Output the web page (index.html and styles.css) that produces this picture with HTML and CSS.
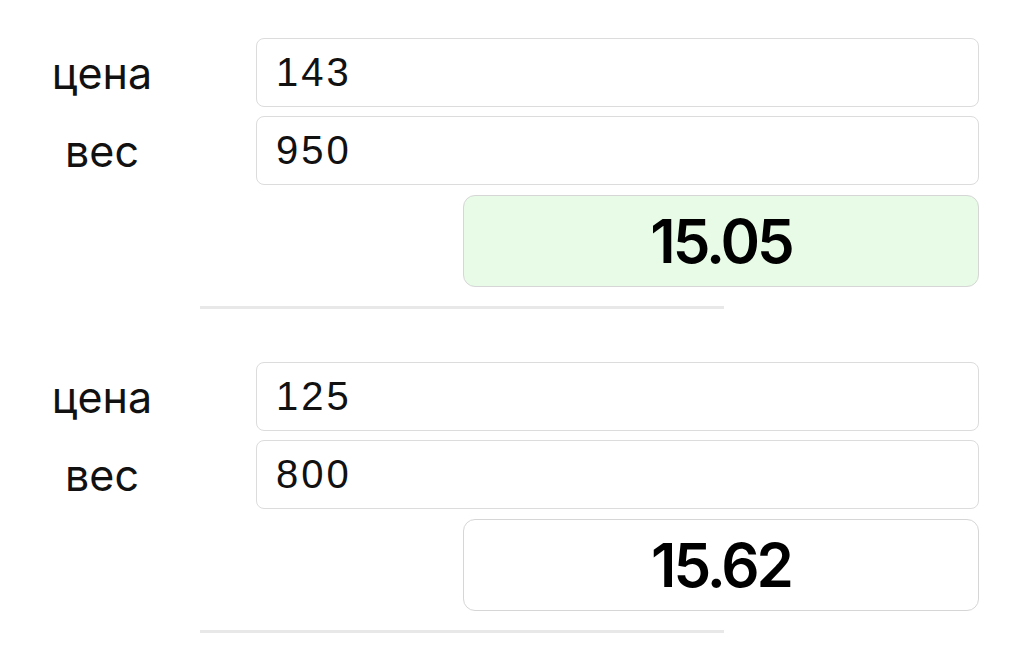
FILE: index.html
```html
<!DOCTYPE html>
<html lang="ru">
<head>
<meta charset="utf-8">
<title>Цена за вес</title>
<link rel="stylesheet" href="styles.css">
</head>
<body>
<main class="page">
  <section class="group">
    <label class="label">цена</label>
    <div class="field">143</div>
    <label class="label">вес</label>
    <div class="field">950</div>
    <div class="result result-best">15.05</div>
    <div class="divider"></div>
  </section>
  <section class="group">
    <label class="label">цена</label>
    <div class="field">125</div>
    <label class="label">вес</label>
    <div class="field">800</div>
    <div class="result">15.62</div>
    <div class="divider"></div>
  </section>
</main>
</body>
</html>
```
FILE: styles.css
```css
html, body {
  margin: 0;
  padding: 0;
  background: #ffffff;
}

.page {
  padding-top: 38px;
  display: flex;
  flex-direction: column;
  gap: 53px;
}

.group {
  display: grid;
  grid-template-columns: 204px 723px;
  column-gap: 52px;
  row-gap: 9px;
  align-items: center;
}

.label {
  text-align: center;
  font-family: "Inter", "Noto Sans", sans-serif;
  font-size: 43px;
  font-weight: 400;
  color: #111;
}

.field {
  grid-column: 2;
  box-sizing: border-box;
  height: 69px;
  border: 1px solid #dcdcdc;
  border-radius: 8px;
  padding: 0 19px;
  display: flex;
  align-items: center;
  font-family: "Liberation Sans", Arial, sans-serif;
  font-size: 40px;
  letter-spacing: 3px;
  color: #111;
}

.result {
  grid-column: 2;
  justify-self: end;
  box-sizing: border-box;
  width: 516px;
  height: 92px;
  margin-top: 1px;
  border: 1px solid #d6d6d6;
  border-radius: 12px;
  display: flex;
  align-items: center;
  justify-content: center;
  font-family: "Inter", "Noto Sans", sans-serif;
  font-size: 60px;
  font-weight: 600;
  letter-spacing: -3px;
  color: #000;
  background: #ffffff;
}

.result-best {
  background: #e7fbe7;
}

.divider {
  grid-column: 1 / 3;
  justify-self: start;
  margin-left: 200px;
  margin-top: 10px;
  width: 524px;
  height: 3px;
  background: #e8e8e8;
}
```
